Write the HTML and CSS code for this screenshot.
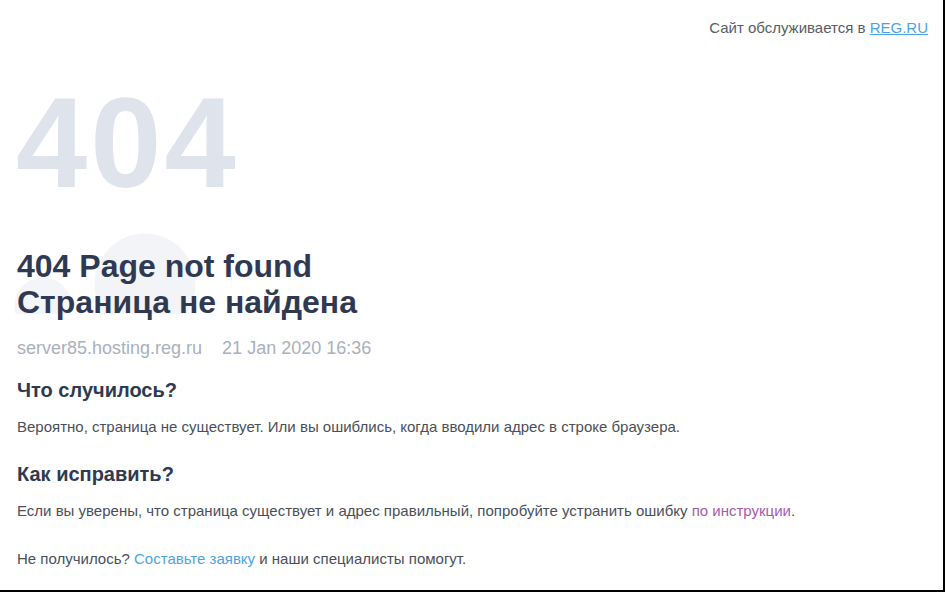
FILE: index.html
```html
<!DOCTYPE html>
<html lang="ru">
<head>
<meta charset="utf-8">
<title>404 Page not found</title>
<link rel="stylesheet" href="styles.css">
</head>
<body>
<div class="frame">
  <header class="top">
    <span>Сайт обслуживается в <a class="link" href="#">REG.RU</a></span>
  </header>
  <main class="content">
    <div class="big">404</div>
    <div class="title-wrap">
      <div class="cloud"></div>
      <h1 class="title">404 Page not found<br>Страница не найдена</h1>
    </div>
    <div class="meta"><span>server85.hosting.reg.ru</span><span>21 Jan 2020 16:36</span></div>
    <h2 class="sub">Что случилось?</h2>
    <p class="text">Вероятно, страница не существует. Или вы ошиблись, когда вводили адрес в строке браузера.</p>
    <h2 class="sub">Как исправить?</h2>
    <p class="text">Если вы уверены, что страница существует и адрес правильный, попробуйте устранить ошибку <a class="visited" href="#">по инструкции</a>.</p>
    <p class="text last">Не получилось? <a class="link2" href="#">Составьте заявку</a> и наши специалисты помогут.</p>
  </main>
</div>
</body>
</html>
```
FILE: styles.css
```css
html, body {
  margin: 0;
  padding: 0;
  background: #fff;
}
body {
  font-family: "Liberation Sans", Arial, sans-serif;
  color: #4a4f5a;
}
.frame {
  width: 943px;
  height: 590px;
  border-right: 2px solid #000;
  border-bottom: 2px solid #000;
  overflow: hidden;
  box-sizing: content-box;
}
.top {
  display: flex;
  justify-content: flex-end;
  padding: 19px 15px 0 0;
  font-size: 15px;
  line-height: 18px;
  color: #585d68;
}
.link {
  color: #4aa3e8;
  text-decoration: underline;
}
.content {
  padding: 0 0 0 17px;
}
.big {
  margin-top: 36px;
  font-size: 128px;
  font-weight: bold;
  line-height: 140px;
  color: #dfe3ec;
  letter-spacing: 3px;
  margin-left: -1px;
}
.title-wrap {
  position: relative;
  margin-top: 35px;
}
.cloud {
  position: absolute;
  left: -10px;
  top: -30px;
  width: 200px;
  height: 96px;
  overflow: hidden;
  background:
    radial-gradient(circle at 138px 66px, #f3f4f8 0 50px, transparent 51px),
    radial-gradient(circle at 36px 88px, #f4f5f9 0 28px, transparent 29px);
}
.title {
  position: relative;
  margin: 0;
  font-size: 32px;
  line-height: 36px;
  font-weight: bold;
  color: #2f3a52;
}
.meta {
  margin-top: 17px;
  display: flex;
  gap: 20px;
  font-size: 18px;
  line-height: 22px;
  color: #aab0bd;
}
.sub {
  margin: 19px 0 0;
  font-size: 20px;
  line-height: 24px;
  font-weight: bold;
  color: #2f3a52;
}
.text {
  margin: 16px 0 0;
  font-size: 15px;
  line-height: 18px;
  color: #4a4f5a;
}
.text + .sub {
  margin-top: 26px;
}
.text.last {
  margin-top: 30px;
}
.visited {
  color: #a25bb5;
  text-decoration: none;
}
.link2 {
  color: #4aa3e8;
  text-decoration: none;
}
```
